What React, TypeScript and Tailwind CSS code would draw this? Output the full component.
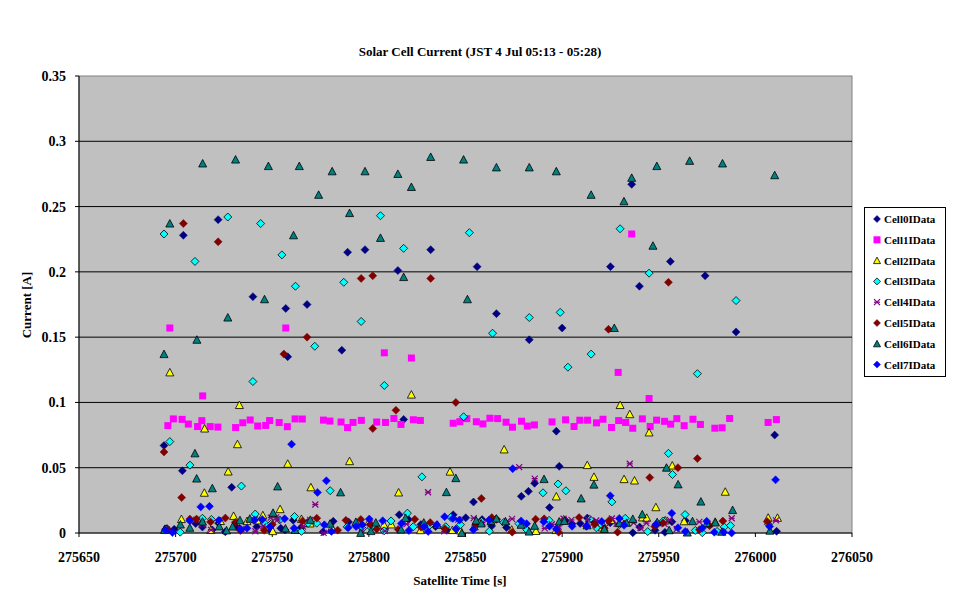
import React from 'react';

const L = 79, R = 852, T = 76, B = 533;
const sx = (t: number) => L + ((t - 275650) / 400) * (R - L);
const sy = (v: number) => B - (v / 0.35) * (B - T);

function rng(seed: number) {
  let s = seed;
  return () => {
    s = (s * 16807) % 2147483647;
    return (s - 1) / 2147483646;
  };
}

type Pt = [number, number];
const highs: Record<number, Pt[]> = {
  0: [[275704,0.228],[275722,0.24],[275740,0.181],[275757,0.172],[275768,0.175],[275789,0.215],[275798,0.217],[275815,0.201],[275832,0.217],[275856,0.204],[275866,0.168],[275883,0.148],[275900,0.157],[275925,0.204],[275936,0.267],[275940,0.189],[275956,0.208],[275974,0.197],[275990,0.154],[276010,0.075],[275694,0.067],[275758,0.135],[275786,0.14],[275818,0.087],[275897,0.078],[275729,0.035]],
  1: [[275697,0.157],[275714,0.105],[275757,0.157],[275808,0.138],[275822,0.134],[275929,0.123],[275936,0.229],[275945,0.103]],
  2: [[275697,0.123],[275733,0.098],[275758,0.053],[275770,0.035],[275822,0.106],[275870,0.064],[275930,0.098],[275935,0.091],[275945,0.077],[275715,0.08],[275732,0.068],[275790,0.055],[275842,0.047],[275913,0.052],[275897,0.028]],
  3: [[275694,0.229],[275710,0.208],[275727,0.242],[275744,0.237],[275755,0.213],[275762,0.189],[275787,0.192],[275796,0.162],[275806,0.243],[275818,0.218],[275852,0.23],[275864,0.153],[275883,0.165],[275899,0.169],[275903,0.127],[275930,0.233],[275945,0.199],[275970,0.122],[275990,0.178],[275740,0.116],[275772,0.143],[275808,0.113],[275849,0.089],[275915,0.137],[275697,0.07],[275955,0.061]],
  4: [[275752,0.012],[275935,0.053]],
  5: [[275704,0.237],[275722,0.223],[275756,0.137],[275768,0.15],[275796,0.195],[275802,0.197],[275832,0.195],[275924,0.156],[275955,0.192],[275814,0.094],[275845,0.1],[275694,0.062],[275802,0.08],[275970,0.057]],
  6: [[275697,0.237],[275714,0.283],[275731,0.286],[275748,0.281],[275764,0.281],[275781,0.277],[275798,0.277],[275815,0.275],[275832,0.288],[275849,0.286],[275866,0.28],[275883,0.28],[275897,0.277],[275915,0.259],[275932,0.254],[275949,0.281],[275966,0.285],[275983,0.283],[276010,0.274],[275774,0.259],[275790,0.245],[275806,0.226],[275822,0.265],[275936,0.272],[275947,0.22],[275694,0.137],[275711,0.148],[275727,0.165],[275746,0.179],[275761,0.228],[275818,0.196],[275851,0.179],[275927,0.157],[275710,0.061],[275845,0.042],[275954,0.05]],
  7: [[275713,0.02],[275760,0.068],[275778,0.04],[275845,0.003]],
};

const series = [0,1,2,3,4,5,6,7].map((k) => {
  const r = rng(97 + k * 131);
  const pts: Pt[] = [...highs[k]];
  for (let t = 275694; t <= 276010; t += 3.9) {
    if (t > 275990 && t < 276005) continue;
    if (k === 1) {
      if (r() < 0.85) pts.push([t + r() * 2, 0.08 + r() * 0.008]);
      continue;
    }
    const p = r();
    if (p < 0.55) pts.push([t + r() * 2, r() * 0.012]);
    else if (p < 0.65) pts.push([t + r() * 2, 0.012 + r() * 0.04]);
  }
  return pts;
});

const colors = ['#000080','#ff00ff','#ffff00','#00ffff','#800080','#800000','#008080','#0000ff'];

function Marker({ k, x, y, s = 4 }: { k: number; x: number; y: number; s?: number }) {
  const c = colors[k];
  if (k === 1) return <rect x={x - 3.5} y={y - 3.5} width={7} height={7} fill={c} />;
  if (k === 2 || k === 6)
    return <polygon points={`${x},${y - s} ${x + s},${y + s - 0.5} ${x - s},${y + s - 0.5}`} fill={c} stroke="#000" strokeWidth={0.8} />;
  if (k === 4)
    return (
      <g stroke={c} strokeWidth={1.2}>
        <line x1={x - 3} y1={y - 3} x2={x + 3} y2={y + 3} />
        <line x1={x - 3} y1={y + 3} x2={x + 3} y2={y - 3} />
        <line x1={x - 3} y1={y} x2={x + 3} y2={y} />
      </g>
    );
  return <polygon points={`${x},${y - s} ${x + s},${y} ${x},${y + s} ${x - s},${y}`} fill={c} stroke={k === 3 ? '#000' : c} strokeWidth={k === 3 ? 0.8 : 0.5} />;
}

export default function App() {
  const yTicks = [0, 0.05, 0.1, 0.15, 0.2, 0.25, 0.3, 0.35];
  const xTicks = [275650, 275700, 275750, 275800, 275850, 275900, 275950, 276000, 276050];
  const font = '"Liberation Serif", "Times New Roman", serif';
  return (
    <div className="w-[970px] h-[604px] bg-white">
      <svg width={970} height={604} style={{ fontFamily: font }} className="font-bold">
        <text x={480} y={56} textAnchor="middle" fontSize={13}>Solar Cell Current (JST 4 Jul 05:13 - 05:28)</text>
        <rect x={L} y={T} width={R - L} height={B - T} fill="#c0c0c0" stroke="#808080" />
        {yTicks.slice(1, -1).map((v) => (
          <line key={v} x1={L} x2={R} y1={sy(v)} y2={sy(v)} stroke="#000" />
        ))}
        <line x1={L} x2={L} y1={T} y2={B} stroke="#000" />
        <line x1={L} x2={R} y1={B} y2={B} stroke="#000" />
        {yTicks.map((v) => (
          <g key={v}>
            <line x1={L - 4} x2={L} y1={sy(v)} y2={sy(v)} stroke="#000" />
            <text x={66} y={sy(v) + 5} textAnchor="end" fontSize={14}>{v === 0 ? '0' : String(v)}</text>
          </g>
        ))}
        {xTicks.map((t) => (
          <g key={t}>
            <line x1={sx(t)} x2={sx(t)} y1={B} y2={B + 4} stroke="#000" />
            <text x={sx(t)} y={562} textAnchor="middle" fontSize={14}>{t}</text>
          </g>
        ))}
        {series.map((pts, k) => pts.map(([t, v], i) => <Marker key={`${k}-${i}`} k={k} x={sx(t)} y={sy(v)} />))}
        <text x={460} y={585} textAnchor="middle" fontSize={13}>Satellite Time [s]</text>
        <text transform="translate(31,305) rotate(-90)" textAnchor="middle" fontSize={13}>Current [A]</text>
        <rect x={864.5} y={207.5} width={81} height={169} fill="#fff" stroke="#000" />
        {colors.map((_, k) => (
          <g key={k}>
            <Marker k={k} x={877} y={219 + k * 20.8} s={3.5} />
            <text x={884} y={223 + k * 20.8} fontSize={11}>{`Cell${k}IData`}</text>
          </g>
        ))}
      </svg>
    </div>
  );
}
